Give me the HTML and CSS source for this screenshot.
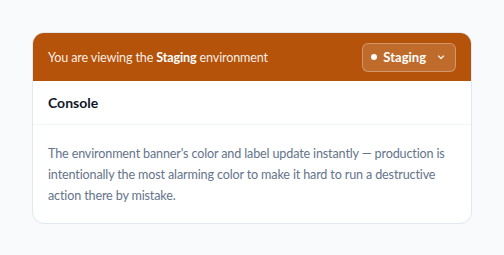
FILE: index.html
```html
<!DOCTYPE html>
<html lang="en">
<head>
    <meta charset="UTF-8">
    <meta name="viewport" content="width=device-width, initial-scale=1.0">
    <title>Environment banner</title>
    <link rel="stylesheet" href="styles.css">
</head>
<body>
    <div class="card">
        <div class="env-banner">
            <p>You are viewing the <strong>Staging</strong> environment</p>
            <button class="env-switch">
                <span class="dot"></span>
                <span class="env-name">Staging</span>
                <svg class="chevron" width="10" height="10" viewBox="0 0 10 10">
                    <path d="M2.5 4 L5 6.5 L7.5 4" fill="none" stroke="currentColor" stroke-width="1.4" stroke-linecap="round" stroke-linejoin="round"/>
                </svg>
            </button>
        </div>
        <div class="card-title">Console</div>
        <div class="card-body">
            <p>The environment banner's color and label update instantly — production is intentionally the most alarming color to make it hard to run a destructive action there by mistake.</p>
        </div>
    </div>
</body>
</html>
```

FILE: styles.css
```css
* {
    margin: 0;
    padding: 0;
    box-sizing: border-box;
}

body {
    font-family: Lato, 'Open Sans', sans-serif;
    background: #f8fafc;
    padding: 32px;
}

.card {
    width: 440px;
    background: white;
    border: 1px solid #e2e8f0;
    border-radius: 12px;
    overflow: hidden;
}

.env-banner {
    display: flex;
    align-items: center;
    justify-content: space-between;
    height: 48px;
    padding: 0 15px;
    background: #b45309;
    color: rgba(255,255,255,0.92);
    font-size: 12.6px;
    letter-spacing: -0.15px;
}

.env-banner strong {
    color: white;
    font-weight: 700;
}

.env-switch {
    display: flex;
    align-items: center;
    gap: 6px;
    height: 29px;
    padding: 0 9px 0 8px;
    background: rgba(255,255,255,0.14);
    border: 1px solid rgba(255,255,255,0.3);
    border-radius: 6px;
    color: white;
    font-family: inherit;
    font-size: 13px;
    font-weight: 700;
}

.dot {
    width: 6px;
    height: 6px;
    border-radius: 50%;
    background: white;
}

.chevron {
    margin-left: 4px;
    opacity: 0.85;
}

.card-title {
    height: 44px;
    display: flex;
    align-items: center;
    padding: 0 15px;
    border-bottom: 1px solid #f1f5f9;
    color: #0f172a;
    font-size: 14px;
    font-weight: 700;
}

.card-body {
    padding: 19px 15px 17px;
    color: #64748b;
    font-size: 12.6px;
    letter-spacing: -0.15px;
    line-height: 20.8px;
}
```
